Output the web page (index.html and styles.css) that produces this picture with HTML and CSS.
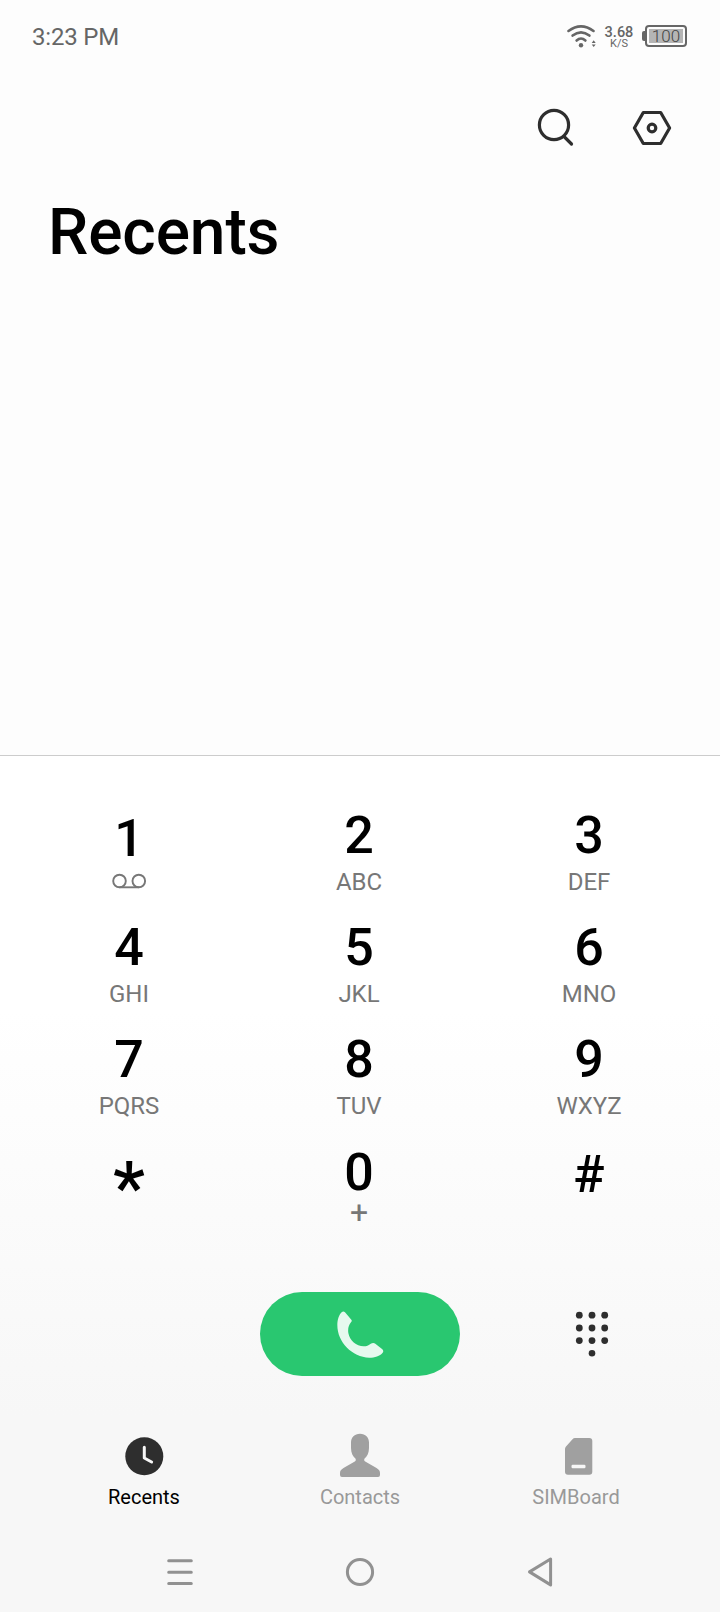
FILE: index.html
```html
<!DOCTYPE html>
<html lang="en">
<head>
    <meta charset="utf-8">
    <title>Recents</title>
    <link rel="stylesheet" href="styles.css">
</head>
<body>

    <div class="status">
        <span class="time">3:23 PM</span>
        <svg class="wifi" width="30" height="24" viewBox="566 23 30 24">
            <g fill="none" stroke="#666" stroke-width="2.6" stroke-linecap="round">
                <path d="M568.5 30Q581 20.600 593.500 30"/>
                <path d="M572.600 34.600Q581 28 589.400 34.600"/>
                <path d="M576.600 39.500Q581 35.500 585.400 39.500"/>
            </g>
            <circle cx="581" cy="44.200" r="2.200" fill="#666"/>
            <path d="M591.700 42l2-2.700 2 2.700zM591.700 43.400l2 2.700 2-2.700z" fill="#666"/>
        </svg>
        <div class="speed"><b>3.68</b><span>K/S</span></div>
        <div class="battery"><div class="charge">100</div></div>
    </div>

    <div class="toolbar">
        <svg width="40" height="40" viewBox="534 108 40 40" fill="none" stroke="#2e2e2e" stroke-width="3.200" stroke-linecap="round">
            <circle cx="554" cy="125" r="14.600"/>
            <path d="M564.500 137l7 7"/>
        </svg>
        <svg width="40" height="40" viewBox="632 108 40 40" fill="none" stroke="#2e2e2e" stroke-width="3.200" stroke-linejoin="round">
            <path d="M643.300 112.500h17.400l8.900 15.500-8.900 15.500h-17.400l-8.900-15.500z"/>
            <circle cx="652" cy="128" r="3.800"/>
        </svg>
    </div>

    <h1>Recents</h1>

    <div class="dialer">
        <div class="keys">
            <div class="key one">
                <b>1</b>
                <svg width="36" height="16" viewBox="0 0 36 16" fill="none" stroke="#777" stroke-width="1.900">
                    <circle cx="8.500" cy="8" r="6.300"/>
                    <circle cx="27.800" cy="8" r="6.300"/>
                    <path d="M8.500 14.300h19.300"/>
                </svg>
            </div>
            <div class="key"><b>2</b><span>ABC</span></div>
            <div class="key"><b>3</b><span>DEF</span></div>
            <div class="key"><b>4</b><span>GHI</span></div>
            <div class="key"><b>5</b><span>JKL</span></div>
            <div class="key"><b>6</b><span>MNO</span></div>
            <div class="key"><b>7</b><span>PQRS</span></div>
            <div class="key"><b>8</b><span>TUV</span></div>
            <div class="key"><b>9</b><span>WXYZ</span></div>
            <div class="key star"><b>*</b></div>
            <div class="key zero"><b>0</b><span>+</span></div>
            <div class="key hash"><b>#</b></div>
        </div>

        <div class="actions">
            <div class="call">
                <svg width="47" height="47" viewBox="0 0 141 141" fill="#e6f9ee">
                    <path d="M14 4Q19 -1 24 4L43 26Q46 30 42 34C35 43 32 53 34 66C38 88 58 106 80 106C89 106 94 103 100 99Q109 93 115 98L136 115Q141 120 137 125C129 135 113 140 97 140C45 138 1 94 1 42C1 26 6 11 14 4Z"/>
                </svg>
            </div>
            <svg class="dots" width="34" height="46" viewBox="575 1311 34 46" fill="#2e2e2e">
                <circle cx="579.300" cy="1315.200" r="3.400"/>
                <circle cx="592" cy="1315.200" r="3.400"/>
                <circle cx="604.700" cy="1315.200" r="3.400"/>
                <circle cx="579.300" cy="1328" r="3.400"/>
                <circle cx="592" cy="1328" r="3.400"/>
                <circle cx="604.700" cy="1328" r="3.400"/>
                <circle cx="579.300" cy="1340.600" r="3.400"/>
                <circle cx="592" cy="1340.600" r="3.400"/>
                <circle cx="604.700" cy="1340.600" r="3.400"/>
                <circle cx="592" cy="1353.300" r="3.300"/>
            </svg>
        </div>

        <div class="tabs">
            <div class="tab active">
                <svg width="48" height="48" viewBox="0 0 48 48">
                    <circle cx="24.300" cy="24.300" r="19" fill="#2e2e2e"/>
                    <path d="M24.300 15.300v10.700l7.300 4" fill="none" stroke="#f7f7f7" stroke-width="3" stroke-linecap="round" stroke-linejoin="round"/>
                </svg>
                <span>Recents</span>
            </div>
            <div class="tab">
                <svg width="48" height="48" viewBox="0 0 48 48" fill="#a0a0a0">
                    <path d="M24 1.800C29.500 1.800 33 5.500 33 10.500V16C33 21 31 24.500 28.600 26.500C27.800 28 28.200 28.800 29.200 29.400L40.500 36C43 37.500 44 39 44 41V43Q44 45 42 45H6Q4 45 4 43V41C4 39 5 37.500 7.500 36L18.800 29.400C19.800 28.800 20.200 28 19.400 26.500C17 24.500 15 21 15 16V10.500C15 5.500 18.500 1.800 24 1.800Z"/>
                </svg>
                <span>Contacts</span>
            </div>
            <div class="tab">
                <svg width="48" height="48" viewBox="0 0 48 48">
                    <path d="M23 6H37.300Q40.300 6 40.300 9V39.700Q40.300 42.700 37.300 42.700H16Q13 42.700 13 39.700V17Q13 15.500 14 14.400L20.500 7.200Q21.500 6 23 6Z" fill="#a0a0a0"/>
                    <rect x="19.500" y="32.700" width="14" height="3.600" rx="1.200" fill="#f7f7f7"/>
                </svg>
                <span>SIMBoard</span>
            </div>
        </div>

        <div class="navbar">
            <svg width="32" height="32" viewBox="0 0 32 32" stroke="#919191" stroke-width="3" stroke-linecap="round">
                <path d="M4.700 4.800h22.600M4.700 16.200h22.600M4.700 27.500h22.600"/>
            </svg>
            <svg width="32" height="32" viewBox="0 0 32 32" fill="none" stroke="#919191" stroke-width="3">
                <circle cx="16" cy="16" r="12.600"/>
            </svg>
            <svg width="32" height="32" viewBox="0 0 32 32" fill="none" stroke="#919191" stroke-width="3" stroke-linejoin="round">
                <path d="M5.500 15.900L26.600 3V28.900Z"/>
            </svg>
        </div>
    </div>

</body>
</html>
```

FILE: styles.css
```css
* {
    box-sizing: border-box;
}

body {
    margin: 0;
    width: 720px;
    height: 1612px;
    display: flex;
    flex-direction: column;
    background-color: #fdfdfd;
    font-family: Roboto, sans-serif;
    color: #000;
    overflow: hidden;
}

svg {
    display: block;
    flex: none;
}

.status {
    display: flex;
    align-items: center;
    height: 72px;
    padding: 0 33px 0 32px;
    color: #666;
}

.time {
    font-size: 24px;
    line-height: 28px;
    letter-spacing: -0.2px;
    margin-top: 2px;
}

.wifi {
    margin-left: auto;
    margin-top: -1px;
}

.speed {
    display: flex;
    flex-direction: column;
    align-items: center;
    width: 46px;
    padding-top: 2px;
}

.speed b {
    font-size: 14.5px;
    line-height: 13px;
    font-weight: 500;
}

.speed span {
    font-size: 11px;
    line-height: 10px;
}

.battery {
    display: flex;
    align-items: center;
}

.battery:before {
    content: "";
    width: 3px;
    height: 10px;
    border-radius: 2px 0 0 2px;
    background-color: #666;
}

.charge {
    width: 42px;
    height: 22px;
    padding: 2px;
    border: 2px solid #666;
    border-radius: 4px;
    background-color: #b5b5b5;
    background-clip: content-box;
    color: #444;
    font-size: 17px;
    line-height: 15px;
    font-weight: 300;
    text-align: center;
}

.toolbar {
    display: flex;
    justify-content: flex-end;
    align-items: center;
    gap: 58px;
    height: 112px;
    padding-right: 48px;
}

h1 {
    margin: 0;
    padding-left: 48px;
    font-size: 64px;
    line-height: 98px;
    font-weight: 500;
    letter-spacing: -0.1px;
    flex: 1;
}

.dialer {
    height: 857px;
    border-top: 1px solid #ccc;
    background: linear-gradient(#fff 255px, #f7f7f7 660px);
}

.keys {
    display: grid;
    grid-template-columns: repeat(3, 230px);
    grid-auto-rows: 112px;
    margin-left: 14px;
    padding-top: 50px;
}

.key {
    display: flex;
    flex-direction: column;
    align-items: center;
}

.key b {
    font-size: 52px;
    line-height: 60px;
    font-weight: 500;
}

.key span {
    font-size: 24px;
    line-height: 28px;
    margin-top: 2px;
    color: #777;
}

.one {
    padding-top: 3px;
}

.one svg {
    margin-top: 4px;
}

.star b {
    font-size: 72px;
    line-height: 93px;
}

.zero b {
    line-height: 62px;
}

.zero span {
    font-size: 32px;
    margin-top: -6px;
}

.hash b {
    line-height: 66px;
}

.actions {
    display: grid;
    grid-template-columns: 260px 200px 260px;
    align-items: center;
    height: 84px;
    margin-top: 38px;
}

.call {
    grid-column: 2;
    display: flex;
    align-items: center;
    justify-content: center;
    height: 84px;
    border-radius: 42px;
    background-color: #29c770;
}

.dots {
    margin-left: 115px;
}

.tabs {
    display: flex;
    padding: 56px 36px 0;
}

.tab {
    display: flex;
    flex-direction: column;
    align-items: center;
    width: 216px;
    color: #999;
    font-size: 20px;
    line-height: 24px;
}

.tab span {
    margin-top: 5px;
}

.active {
    color: #000;
}

.navbar {
    display: flex;
    justify-content: space-between;
    padding: 47px 164px 0;
}
```
